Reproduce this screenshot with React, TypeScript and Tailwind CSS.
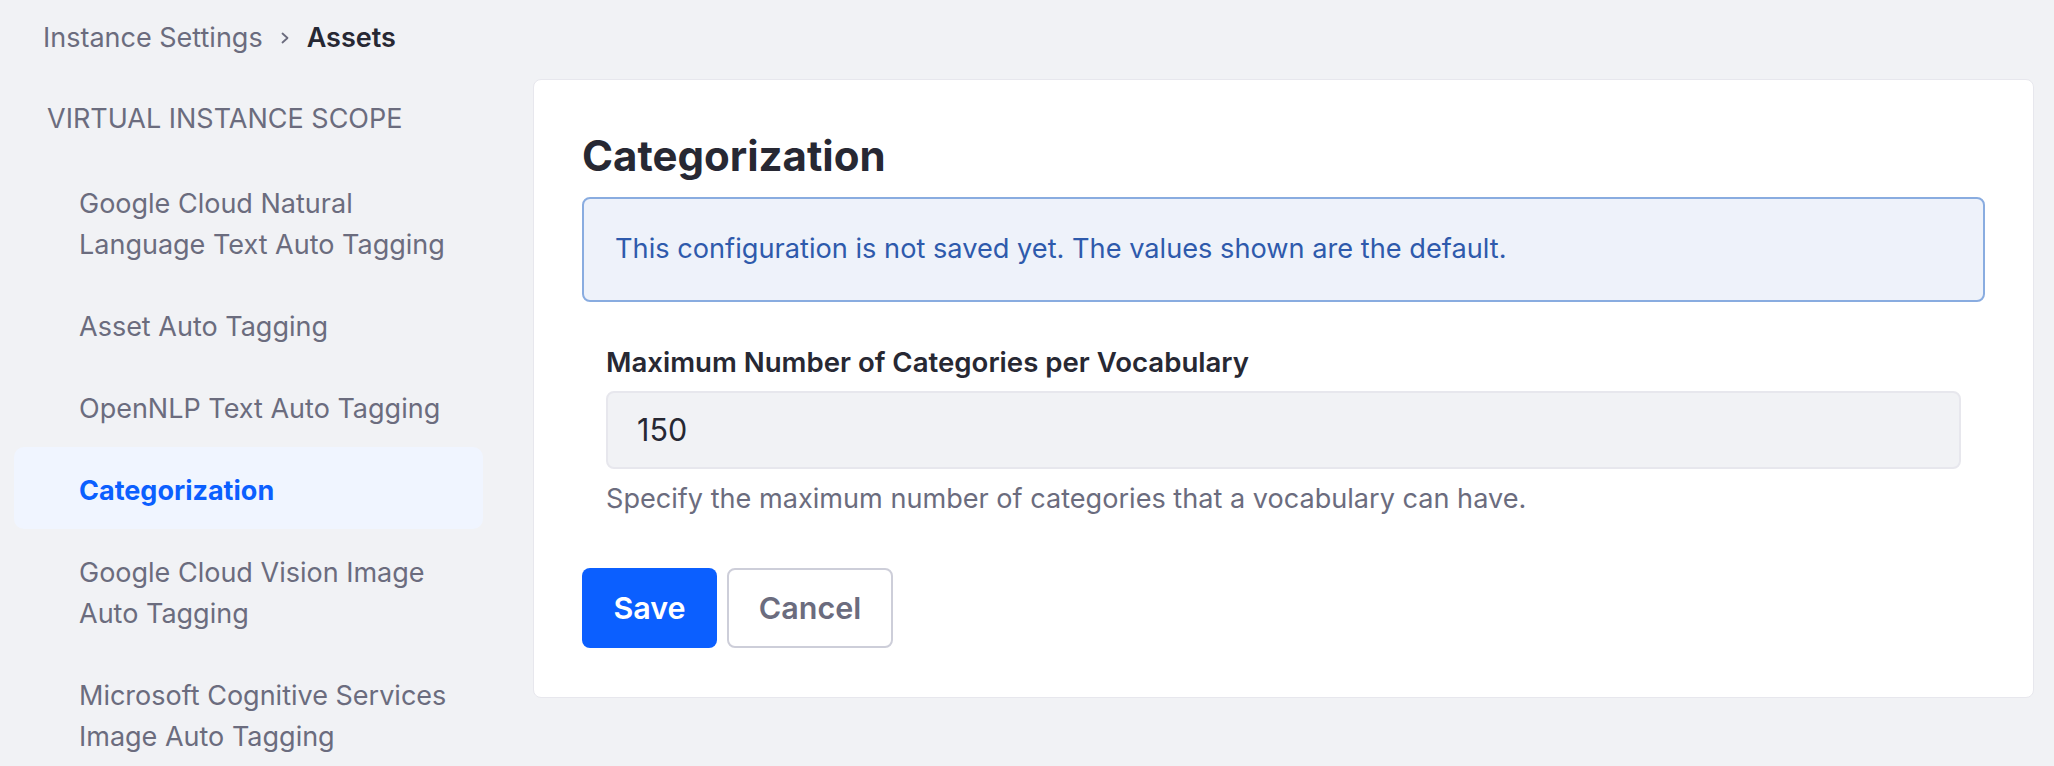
export default function App() {
  const items: { label: string[]; active?: boolean }[] = [
    { label: ["Google Cloud Natural", "Language Text Auto Tagging"] },
    { label: ["Asset Auto Tagging"] },
    { label: ["OpenNLP Text Auto Tagging"] },
    { label: ["Categorization"], active: true },
    { label: ["Google Cloud Vision Image", "Auto Tagging"] },
    { label: ["Microsoft Cognitive Services", "Image Auto Tagging"] },
  ];
  return (
    <div className="w-full h-[766px] overflow-hidden bg-[#f1f2f5] font-['Inter',sans-serif]">
      <div className="pl-[43px] pt-[18px] h-[58px] flex items-start text-[27px] leading-[40px]">
        <span className="text-[#6b6c7e]">Instance Settings</span>
        <span className="w-[44px] h-[40px] flex items-center justify-center">
          <svg width="12" height="14" viewBox="0 0 12 14" fill="none">
            <path d="M3.5 2.5 L8.5 7 L3.5 11.5" stroke="#6b6c7e" strokeWidth="1.8" strokeLinecap="round" strokeLinejoin="round" />
          </svg>
        </span>
        <span className="text-[#272833] font-semibold">Assets</span>
      </div>
      <div className="flex items-start">
        <div className="ml-[14px] w-[469px]">
          <div className="mt-[41px] pl-[33px] text-[27px] leading-[40px] text-[#6b6c7e] uppercase">
            Virtual Instance Scope
          </div>
          <ul className="mt-[21px]">
            {items.map((it, i) => (
              <li
                key={i}
                className={
                  it.active
                    ? "pl-[65px] pt-[22.5px] pb-[18.5px] text-[27px] leading-[41px] rounded-[10px] bg-[#f0f5ff] text-[#0b5fff] font-bold"
                    : "pl-[65px] pt-[22.5px] pb-[18.5px] text-[27px] leading-[41px] text-[#6b6c7e]"
                }
              >
                {it.label.map((l, j) => (
                  <div key={j}>{l}</div>
                ))}
              </li>
            ))}
          </ul>
        </div>
        <div className="ml-[50px] mt-[21px] w-[1501px] h-[619px] bg-white border border-[#e7e7ed] rounded-[8px] px-[48px] pt-[52px]">
          <h2 className="text-[42px] leading-[48px] font-bold text-[#272833]">Categorization</h2>
          <div className="mt-[17px] h-[105px] border-2 border-[#89ace0] bg-[#eef2fa] rounded-[8px] flex items-center pl-[31px] text-[27.2px] text-[#2e5aac]">
            This configuration is not saved yet. The values shown are the default.
          </div>
          <div className="mt-[40px] px-[24px]">
            <label className="block text-[27.6px] leading-[40px] font-semibold text-[#272833]">
              Maximum Number of Categories per Vocabulary
            </label>
            <div className="mt-[9px] h-[78px] bg-[#f1f2f5] border-2 border-[#e7e7ed] rounded-[8px] flex items-center pl-[29px] text-[30.5px] text-[#272833]">
              150
            </div>
            <div className="mt-[12px] text-[27.1px] leading-[36px] text-[#6b6c7e]">
              Specify the maximum number of categories that a vocabulary can have.
            </div>
          </div>
          <div className="mt-[51px] flex gap-[10px]">
            <button className="w-[135px] h-[80px] rounded-[8px] bg-[#0b5fff] text-white text-[30.5px] font-semibold">
              Save
            </button>
            <button className="w-[166px] h-[80px] rounded-[8px] bg-white border-2 border-[#cdced9] text-[#6b6c7e] text-[30.5px] font-semibold">
              Cancel
            </button>
          </div>
        </div>
      </div>
    </div>
  );
}
